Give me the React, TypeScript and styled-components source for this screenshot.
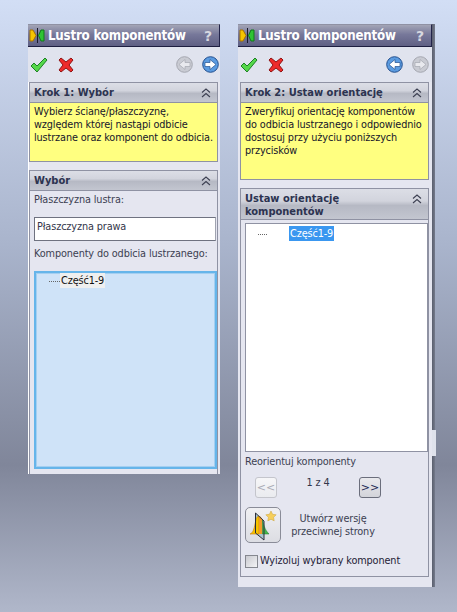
import React from 'react';
import styled, { createGlobalStyle } from 'styled-components';

const GlobalStyle = createGlobalStyle`
  html, body {
    margin: 0;
    padding: 0;
    height: 612px;
    overflow: hidden;
  }
  body {
    background: linear-gradient(180deg, #d2def5 0, #a9b4cc 40%, #80869a 76%, #b0b7ca 100%);
    font-family: 'DejaVu Sans Condensed', 'DejaVu Sans', sans-serif;
    letter-spacing: -0.12px;
  }
`;

const Page = styled.div`
  display: flex;
  align-items: flex-start;
  padding: 24px 0 0 28px;
`;

const Panel = styled.div<{ $width: number; $height: number; $ml?: number; $edge?: boolean }>`
  box-sizing: border-box;
  width: ${p => p.$width}px;
  height: ${p => p.$height}px;
  margin-left: ${p => p.$ml || 0}px;
  background: linear-gradient(90deg, ${p => (p.$edge ? '#fff 1px, #e5e6f0 1px' : '#e5e6f0, #e5e6f0')});
  display: flex;
  flex-direction: column;
  overflow: hidden;
`;

const TitleBar = styled.div`
  box-sizing: border-box;
  flex: none;
  height: 23px;
  display: flex;
  align-items: center;
  padding: 0 7px 0 1px;
  background: linear-gradient(180deg, #a3a5b6 0, #77789a 45%, #5f6084 100%);
  border-top: 1px solid #8f91a3;
  border-right: 1px solid #23244a;
  border-bottom: 1px solid #1d1e40;
`;

const Title = styled.span`
  flex: 1;
  margin-left: 2px;
  color: #fff;
  font-weight: 700;
  font-size: 13.2px;
  letter-spacing: -0.2px;
  white-space: nowrap;
`;

const Help = styled.span`
  color: #d7d8e0;
  font-family: 'DejaVu Sans', sans-serif;
  font-weight: 700;
  font-size: 14px;
`;

const Toolbar = styled.div<{ $pr: number }>`
  flex: none;
  height: 35px;
  display: flex;
  align-items: center;
  padding: 0 ${p => p.$pr}px 0 2px;
  background: #e0e3ee;
`;

const ActionIcon = styled.svg`
  width: 18px;
  height: 18px;
  margin-right: 9px;
`;

const Spacer = styled.div`
  flex: 1;
`;

const NavIcon = styled.svg`
  width: 17px;
  height: 17px;
  margin-left: 9px;
`;

const Section = styled.section<{ $height: number; $mt?: number; $x: number }>`
  box-sizing: border-box;
  flex: none;
  height: ${p => p.$height}px;
  margin: ${p => p.$mt || 0}px ${p => (p.$x === 1 ? 2 : 3)}px 0 ${p => p.$x}px;
  border: 1px solid #8f92a3;
  display: flex;
  flex-direction: column;
  background: #e5e6f0;
`;

const SectionHeader = styled.div<{ $height?: number }>`
  box-sizing: border-box;
  flex: none;
  height: ${p => p.$height || 20}px;
  display: flex;
  align-items: flex-start;
  padding: 3px 4px 0 4px;
  background: linear-gradient(180deg, #dcdee6 0, #d2d4dd 40%, #b6b9c4 55%, #c3c6d0 100%);
  border-bottom: 1px solid #8f92a3;
`;

const SectionTitle = styled.span`
  flex: 1;
  color: #2c3350;
  font-weight: 700;
  font-size: 11px;
  letter-spacing: 0;
  line-height: 13px;
`;

const ChevronIcon = styled.svg`
  width: 10px;
  height: 10px;
  margin: 2px 2px 0 0;
`;

const Note = styled.div`
  flex: 1;
  background: #ffff80;
  color: #16162a;
  font-size: 10.8px;
  line-height: 13px;
  padding: 2px 4px 0 4px;
  white-space: nowrap;
`;

const Body = styled.div`
  flex: 1;
  display: flex;
  flex-direction: column;
  padding: 0 0 0 4px;
  min-height: 0;
`;

const Label = styled.div<{ $mt: number; $mb: number }>`
  color: #3c3f52;
  font-size: 10.8px;
  line-height: 14px;
  margin: ${p => p.$mt}px 0 ${p => p.$mb}px 0;
  white-space: nowrap;
`;

const TextField = styled.div`
  box-sizing: border-box;
  flex: none;
  height: 24px;
  margin-right: 1px;
  padding: 2px 0 0 2px;
  background: #fff;
  border: 1px solid #6f7280;
  border-right-color: #a0a3b0;
  color: #33364a;
  font-size: 10.8px;
  line-height: 14px;
`;

const SelectionList = styled.div`
  box-sizing: border-box;
  flex: none;
  height: 198px;
  background: #cfe3f8;
  border: 2px solid #66b5ea;
  box-shadow: inset 0 0 0 1px #a4cff1;
  padding: 0 0 0 13px;
  display: flex;
  align-items: flex-start;
`;

const TreeDots = styled.span<{ $w: number; $gap: number }>`
  width: ${p => p.$w}px;
  margin: 8px ${p => p.$gap}px 0 0;
  border-top: 1px dotted #666;
`;

const TreeItem = styled.span<{ $selected?: boolean }>`
  padding: 0 1px;
  font-size: 10.8px;
  line-height: 15px;
  color: ${p => (p.$selected ? '#fff' : '#111')};
  background: ${p => (p.$selected ? '#3a97f0' : '#efefef')};
`;

const OrientList = styled.div`
  box-sizing: border-box;
  flex: none;
  height: 229px;
  margin-top: 3px;
  background: #fff;
  border: 1px solid #8f92a3;
  padding: 2px 0 0 12px;
  display: flex;
  align-items: flex-start;
`;

const PagerRow = styled.div`
  display: flex;
  align-items: flex-start;
  height: 21px;
  margin: 8px 0 0 10px;
`;

const PagerButton = styled.button<{ $enabled?: boolean }>`
  box-sizing: border-box;
  width: 22px;
  height: 21px;
  padding: 0;
  border-radius: 3px;
  border: 1px solid ${p => (p.$enabled ? '#6b6e7c' : '#c4c5cc')};
  background: ${p =>
    p.$enabled ? 'linear-gradient(180deg, #e9e9ed, #d3d4da)' : 'linear-gradient(180deg, #f6f6f8, #eaebef)'};
  color: ${p => (p.$enabled ? '#1c2a55' : '#a9abb5')};
  font-family: 'DejaVu Sans', sans-serif;
  font-size: 11px;
  line-height: 18px;
`;

const PagerText = styled.span`
  width: 82px;
  margin-top: -1px;
  text-align: center;
  color: #33364a;
  font-size: 10.8px;
  line-height: 14px;
`;

const OppositeRow = styled.div`
  display: flex;
  align-items: center;
  margin-top: 9px;
`;

const BigButton = styled.button`
  box-sizing: border-box;
  width: 36px;
  height: 36px;
  padding: 0;
  border-radius: 5px;
  border: 1px solid #8a8c98;
  background: linear-gradient(180deg, #f0f0f3, #dcdde3);
  display: flex;
  align-items: center;
  justify-content: center;
`;

const OppositeLabel = styled.div`
  width: 102px;
  margin-left: 1px;
  text-align: center;
  color: #3c3f52;
  font-size: 10.8px;
  line-height: 13px;
`;

const CheckRow = styled.label`
  display: flex;
  align-items: center;
  margin-top: 11px;
  color: #1f2136;
  font-size: 10.8px;
  line-height: 14px;
  white-space: nowrap;
`;

const CheckBox = styled.span`
  box-sizing: border-box;
  width: 13px;
  height: 13px;
  margin-right: 2px;
  border: 1px solid #85878f;
  background: linear-gradient(135deg, #c9cad0, #f3f3f5);
`;

const Splitter = styled.div`
  flex: none;
  width: 4px;
  height: 563px;
  display: flex;
  flex-direction: column;
`;

const SplitterBar = styled.div<{ $height: number }>`
  height: ${p => p.$height}px;
  width: 3px;
  background: linear-gradient(90deg, #595e6d, #747a8b);
`;

const SplitterNotch = styled.div`
  height: 26px;
  width: 4px;
  background: #dfe2ec;
`;

const Logo = () => (
  <svg width="17" height="15" viewBox="0 0 17 15">
    <path d="M1 2h3l3 5.500-3 5.500H1z" fill="#f5c400" stroke="#a87400" />
    <rect x="8" y="0" width="1" height="15" fill="#1a1a2a" />
    <path d="M15 2h-3l-2.500 5.500L12 13h3z" fill="#2fc433" stroke="#107a1a" />
  </svg>
);

const Check = () => (
  <ActionIcon viewBox="0 0 18 18">
    <path d="M1 10l3-3 3 3 8-8 2 2L7 16z" fill="#55d84a" stroke="#1d7f25" strokeWidth="1" strokeLinejoin="round" />
  </ActionIcon>
);

const Cross = () => (
  <ActionIcon viewBox="0 0 18 18">
    <path d="M2 4l2-2 5 4 5-4 2 2-4 5 4 5-2 2-5-4-5 4-2-2 4-5z" fill="#ee2b2b" stroke="#8f1414" strokeWidth="1" strokeLinejoin="round" />
  </ActionIcon>
);

const NavArrow: React.FC<{ dir: 'left' | 'right'; active: boolean }> = ({ dir, active }) => (
  <NavIcon viewBox="0 0 17 17">
    <circle cx="8.500" cy="8.500" r="7.800" fill={active ? '#5b9be0' : '#c9cbd3'} stroke={active ? '#24508f' : '#a5a7b0'} />
    <path
      d={dir === 'right' ? 'M3 6.500h5V3.500l6 5-6 5v-3H3z' : 'M14 6.500H9V3.500l-6 5 6 5v-3h5z'}
      fill={active ? '#fff' : '#e8e9ee'}
      stroke={active ? '#24508f' : '#a5a7b0'}
      strokeWidth="0.7"
    />
  </NavIcon>
);

const Chevrons = () => (
  <ChevronIcon viewBox="0 0 10 10">
    <path d="M1 4.500l4-3.500 4 3.500M1 9l4-3.500L9 9" fill="none" stroke="#3d4052" strokeWidth="1.100" />
  </ChevronIcon>
);

const MirrorIcon = () => (
  <svg width="30" height="32" viewBox="0 0 30 32">
    <path d="M7.500 4l8.500 8v19l-8.500-7z" fill="#a9c3cf" />
    <path d="M2 25c3-1 4-5 5-10 1-5 2-8 4-8v18z" fill="#f6c400" stroke="#c97a00" strokeWidth="0.6" />
    <path d="M11 7c1.500 0 2.500 1.500 3.500 4v14H11z" fill="#f39a2c" />
    <path d="M14.500 11c1 3 1.500 9 6.500 14h-6.500z" fill="#45b84a" stroke="#1e7a2a" strokeWidth="0.5" />
    <path d="M7.500 4l8.500 8v19l-8.500-7z" fill="none" stroke="#2b2f3a" strokeWidth="1" />
    <path d="M23 2l1.600 3.300 3.600.5-2.600 2.500.6 3.600-3.200-1.700-3.200 1.700.6-3.600-2.600-2.500 3.600-.5z" fill="#f6cf5a" stroke="#c9a13a" strokeWidth="0.5" />
  </svg>
);

const Header = () => (
  <TitleBar>
    <Logo />
    <Title>Lustro komponentów</Title>
    <Help>?</Help>
  </TitleBar>
);

const App: React.FC = () => (
  <>
    <GlobalStyle />
    <Page>
      <Panel $width={192} $height={450} $edge>
        <Header />
        <Toolbar $pr={1}>
          <Check />
          <Cross />
          <Spacer />
          <NavArrow dir="left" active={false} />
          <NavArrow dir="right" active />
        </Toolbar>
        <Section $height={80} $x={1}>
          <SectionHeader>
            <SectionTitle>Krok 1: Wybór</SectionTitle>
            <Chevrons />
          </SectionHeader>
          <Note>
            Wybierz ścianę/płaszczyznę,
            <br />
            względem której nastąpi odbicie
            <br />
            lustrzane oraz komponent do odbicia.
          </Note>
        </Section>
        <Section $height={320} $mt={8} $x={1}>
          <SectionHeader>
            <SectionTitle>Wybór</SectionTitle>
            <Chevrons />
          </SectionHeader>
          <Body>
            <Label $mt={2} $mb={10}>Płaszczyzna lustra:</Label>
            <TextField>Płaszczyzna prawa</TextField>
            <Label $mt={6} $mb={10}>Komponenty do odbicia lustrzanego:</Label>
            <SelectionList>
              <TreeDots $w={11} $gap={0} />
              <TreeItem>Część1-9</TreeItem>
            </SelectionList>
          </Body>
        </Section>
      </Panel>
      <Panel $width={194} $height={563} $ml={18}>
        <Header />
        <Toolbar $pr={3}>
          <Check />
          <Cross />
          <Spacer />
          <NavArrow dir="left" active />
          <NavArrow dir="right" active={false} />
        </Toolbar>
        <Section $height={98} $x={2}>
          <SectionHeader>
            <SectionTitle>Krok 2: Ustaw orientację</SectionTitle>
            <Chevrons />
          </SectionHeader>
          <Note>
            Zweryfikuj orientację komponentów
            <br />
            do odbicia lustrzanego i odpowiednio
            <br />
            dostosuj przy użyciu poniższych
            <br />
            przycisków
          </Note>
        </Section>
        <Section $height={389} $mt={8} $x={2}>
          <SectionHeader $height={31}>
            <SectionTitle>
              Ustaw orientację
              <br />
              komponentów
            </SectionTitle>
            <Chevrons />
          </SectionHeader>
          <Body>
            <OrientList>
              <TreeDots $w={9} $gap={22} />
              <TreeItem $selected>Część1-9</TreeItem>
            </OrientList>
            <Label $mt={3} $mb={0}>Reorientuj komponenty</Label>
            <PagerRow>
              <PagerButton>&lt;&lt;</PagerButton>
              <PagerText>1 z 4</PagerText>
              <PagerButton $enabled>&gt;&gt;</PagerButton>
            </PagerRow>
            <OppositeRow>
              <BigButton aria-label="Utwórz wersję przeciwnej strony">
                <MirrorIcon />
              </BigButton>
              <OppositeLabel>
                Utwórz wersję
                <br />
                przeciwnej strony
              </OppositeLabel>
            </OppositeRow>
            <CheckRow>
              <CheckBox />
              Wyizoluj wybrany komponent
            </CheckRow>
          </Body>
        </Section>
      </Panel>
      <Splitter>
        <SplitterBar $height={406} />
        <SplitterNotch />
        <SplitterBar $height={131} />
      </Splitter>
    </Page>
  </>
);

export default App;
